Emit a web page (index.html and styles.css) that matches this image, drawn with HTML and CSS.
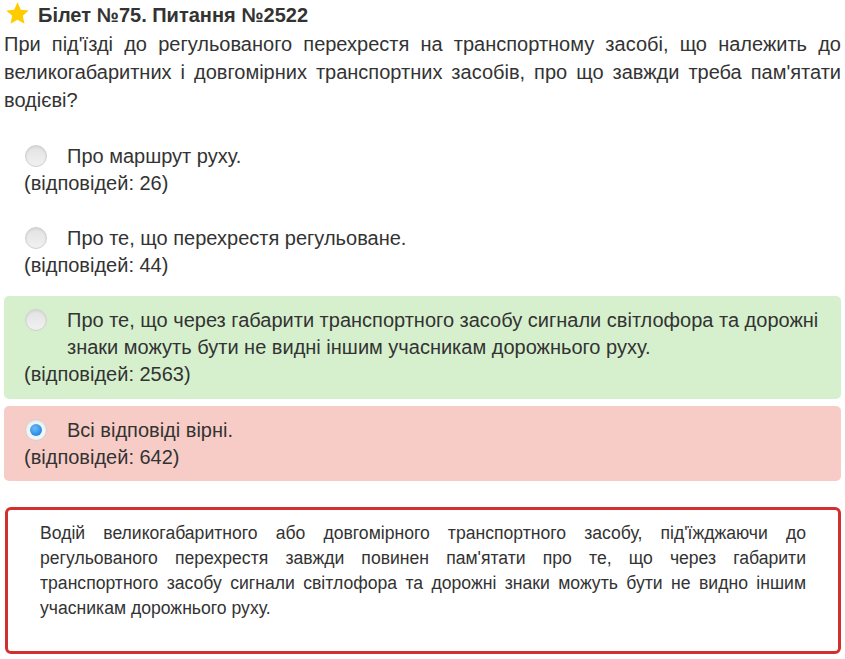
FILE: index.html
```html
<!DOCTYPE html>
<html lang="uk">
<head>
<meta charset="utf-8">
<link rel="stylesheet" href="styles.css">
</head>
<body>
<div class="page">
  <h1 class="title">
    <svg class="star" viewBox="0 0 24 24" width="25" height="25"><path d="M12 1.2l3.2 7.1 7.6.8-5.7 5.1 1.6 7.6L12 17.9l-6.7 3.9 1.6-7.6L1.2 9.1l7.6-.8z" fill="#ffcc00"/></svg>
    <span>Білет №75. Питання №2522</span>
  </h1>
  <p class="question">При під'їзді до регульованого перехрестя на транспортному засобі, що належить до великогабаритних і довгомірних транспортних засобів, про що завжди треба пам'ятати водієві?</p>
  <div class="answers">
    <div class="answer">
      <div class="label"><span class="radio"></span><span class="text">Про маршрут руху.</span></div>
      <div class="count">(відповідей: 26)</div>
    </div>
    <div class="answer">
      <div class="label"><span class="radio"></span><span class="text">Про те, що перехрестя регульоване.</span></div>
      <div class="count">(відповідей: 44)</div>
    </div>
    <div class="answer correct">
      <div class="label"><span class="radio"></span><span class="text">Про те, що через габарити транспортного засобу сигнали світлофора та дорожні знаки можуть бути не видні іншим учасникам дорожнього руху.</span></div>
      <div class="count">(відповідей: 2563)</div>
    </div>
    <div class="answer wrong">
      <div class="label"><span class="radio checked"></span><span class="text">Всі відповіді вірні.</span></div>
      <div class="count">(відповідей: 642)</div>
    </div>
  </div>
  <div class="explain">
    <p>Водій великогабаритного або довгомірного транспортного засобу, під'їжджаючи до регульованого перехрестя завжди повинен пам'ятати про те, що через габарити транспортного засобу сигнали світлофора та дорожні знаки можуть бути не видно іншим учасникам дорожнього руху.</p>
  </div>
</div>
</body>
</html>
```

FILE: styles.css
```css
html, body {
  margin: 0;
  padding: 0;
  background: #fff;
}
body {
  font-family: "Liberation Sans", Arial, sans-serif;
  color: #333;
}
.page {
  width: 837px;
  margin-left: 4px;
}
.title {
  display: flex;
  align-items: center;
  gap: 8px;
  margin: 0;
  height: 30px;
  font-size: 20px;
  font-weight: bold;
  line-height: 30px;
  color: #333;
}
.star {
  display: block;
  margin-left: 1px;
  margin-top: -3px;
}
.question {
  margin: 0;
  font-size: 20px;
  line-height: 28px;
  text-align: justify;
}
.answers {
  margin-top: 18px;
  display: flex;
  flex-direction: column;
  gap: 7px;
}
.answer {
  padding: 11px 0 10px 20px;
  border-radius: 5px;
  font-size: 20px;
  line-height: 27px;
}
.answer.correct {
  background: #d6f0ce;
  padding-bottom: 11px;
}
.answer.wrong {
  background: #f8ccc6;
}
.label {
  display: flex;
  align-items: flex-start;
}
.radio {
  flex: none;
  width: 20px;
  height: 20px;
  margin: 2px 20px 0 1px;
  border-radius: 50%;
  border: 1px solid #cfcfcf;
  background: linear-gradient(#e2e2e2, #f1f1f1);
  box-shadow: inset 0 1px 2px rgba(0,0,0,0.08);
  position: relative;
}
.radio.checked {
  background: #f4f4f4;
}
.radio.checked::after {
  content: "";
  position: absolute;
  left: 4px;
  top: 4px;
  width: 12px;
  height: 12px;
  border-radius: 50%;
  background: radial-gradient(circle at 40% 35%, #6fbcf7, #1e88e5 75%);
}
.text {
  padding-right: 20px;
}
.explain {
  margin-top: 26px;
  margin-left: 1px;
  border: 3px solid #d32f2f;
  border-radius: 6px;
  padding: 11px 32px 30px 32px;
}
.explain p {
  margin: 0;
  font-size: 17.6px;
  line-height: 25px;
  text-align: justify;
}
```
